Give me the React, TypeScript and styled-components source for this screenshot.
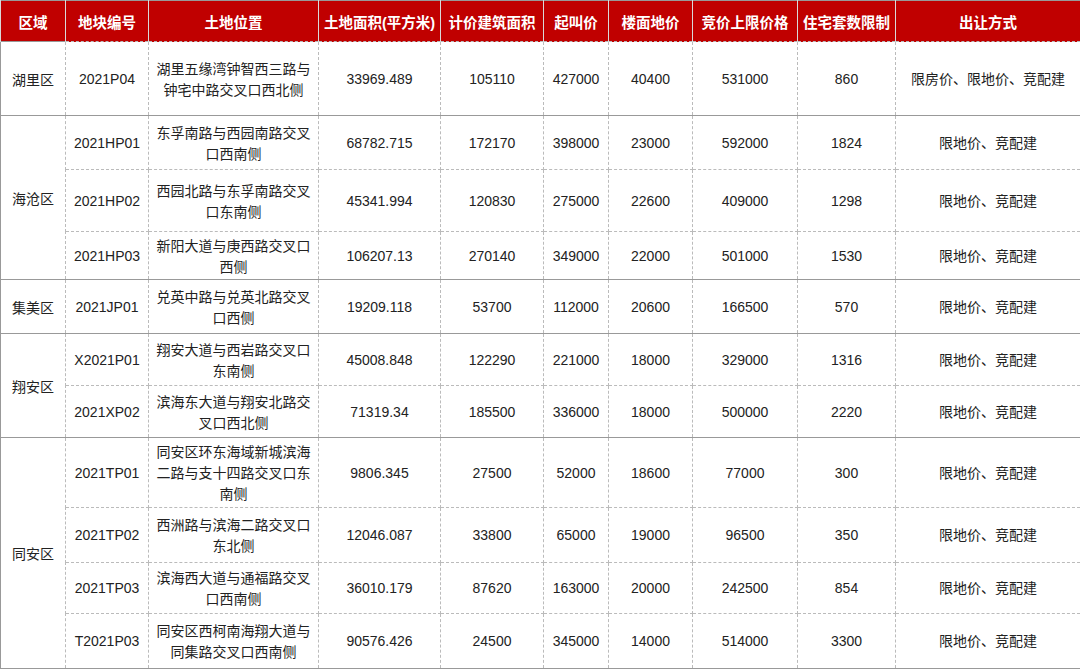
import React from "react";
import styled, { createGlobalStyle } from "styled-components";

const G = createGlobalStyle`
  body { margin: 0; background: #fff; font-family: "Liberation Sans", "Noto Sans CJK SC", sans-serif; }
`;

const Table = styled.table`
  width: 1080px;
  border-collapse: collapse;
  table-layout: fixed;
  font-size: 14px;
  color: #222;
  border: 1px solid #999;
`;
const Th = styled.th`
  background: #c00000;
  color: #fff;
  font-weight: bold;
  height: 40px;
  padding: 0;
  border-left: 1px solid #d9d9d9;
  font-size: 14.5px;
`;
const Td = styled.td<{ $solid?: boolean }>`
  text-align: center;
  padding: 0 6px;
  line-height: 20px;
  color: #222;
  border: 1px dashed #bbb;
  border-bottom: 1px ${(p) => (p.$solid ? "solid #999" : "dashed #bbb")};
`;
const Place = styled.span`
  font-family: "Noto Sans CJK SC", sans-serif;
  color: #222;
`;
const Area = styled.td`
  text-align: center;
  border: 1px solid #999;
  border-right: 1px dashed #bbb;
  padding: 0;
`;

const widths = [65, 83, 170, 122, 103, 65, 84, 105, 98, 185];
const heads = ["区域", "地块编号", "土地位置", "土地面积(平方米)", "计价建筑面积", "起叫价", "楼面地价", "竞价上限价格", "住宅套数限制", "出让方式"];

type Row = [string, string, string, string, string, string, string, string, string, number];
const groups: { area: string; rows: Row[] }[] = [
  { area: "湖里区", rows: [["2021P04", "湖里五缘湾钟智西三路与钟宅中路交叉口西北侧", "33969.489", "105110", "427000", "40400", "531000", "860", "限房价、限地价、竞配建", 74]] },
  { area: "海沧区", rows: [
    ["2021HP01", "东孚南路与西园南路交叉口西南侧", "68782.715", "172170", "398000", "23000", "592000", "1824", "限地价、竞配建", 54],
    ["2021HP02", "西园北路与东孚南路交叉口东南侧", "45341.994", "120830", "275000", "22600", "409000", "1298", "限地价、竞配建", 62],
    ["2021HP03", "新阳大道与庚西路交叉口西侧", "106207.13", "270140", "349000", "22000", "501000", "1530", "限地价、竞配建", 48],
  ] },
  { area: "集美区", rows: [["2021JP01", "兑英中路与兑英北路交叉口西侧", "19209.118", "53700", "112000", "20600", "166500", "570", "限地价、竞配建", 54]] },
  { area: "翔安区", rows: [
    ["X2021P01", "翔安大道与西岩路交叉口东南侧", "45008.848", "122290", "221000", "18000", "329000", "1316", "限地价、竞配建", 52],
    ["2021XP02", "滨海东大道与翔安北路交叉口西北侧", "71319.34", "185500", "336000", "18000", "500000", "2220", "限地价、竞配建", 52],
  ] },
  { area: "同安区", rows: [
    ["2021TP01", "同安区环东海域新城滨海二路与支十四路交叉口东南侧", "9806.345", "27500", "52000", "18600", "77000", "300", "限地价、竞配建", 70],
    ["2021TP02", "西洲路与滨海二路交叉口东北侧", "12046.087", "33800", "65000", "19000", "96500", "350", "限地价、竞配建", 55],
    ["2021TP03", "滨海西大道与通福路交叉口西南侧", "36010.179", "87620", "163000", "20000", "242500", "854", "限地价、竞配建", 51],
    ["T2021P03", "同安区西柯南海翔大道与同集路交叉口西南侧", "90576.426", "24500", "345000", "14000", "514000", "3300", "限地价、竞配建", 55],
  ] },
];

export default function App() {
  return (
    <>
      <G />
      <Table>
        <colgroup>{widths.map((w, i) => <col key={i} style={{ width: w }} />)}</colgroup>
        <thead><tr>{heads.map((h) => <Th key={h}>{h}</Th>)}</tr></thead>
        <tbody>
          {groups.map((g) =>
            g.rows.map((r, i) => {
              const last = i === g.rows.length - 1;
              return (
                <tr key={r[0]} style={{ height: r[9] }}>
                  {i === 0 && <Area rowSpan={g.rows.length}>{g.area}</Area>}
                  {r.slice(0, 9).map((c, j) => (
                    <Td key={j} $solid={last}>{j === 1 ? <Place>{c as string}</Place> : (c as string)}</Td>
                  ))}
                </tr>
              );
            })
          )}
        </tbody>
      </Table>
    </>
  );
}
